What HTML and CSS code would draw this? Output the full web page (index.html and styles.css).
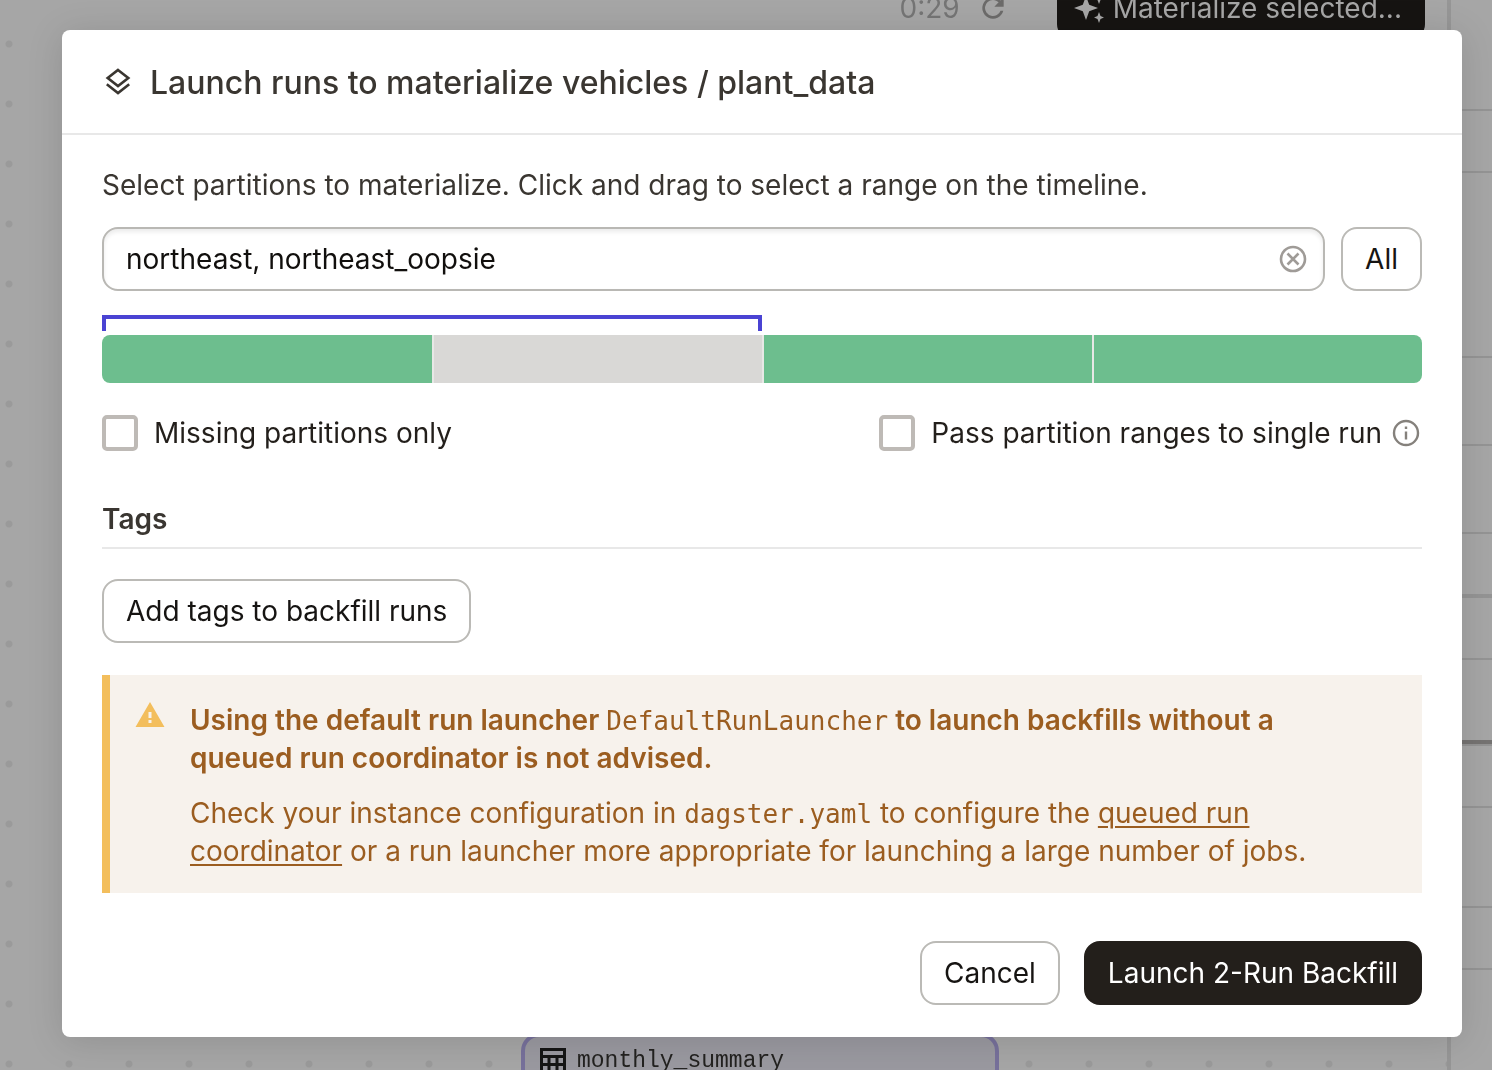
FILE: index.html
```html
<!DOCTYPE html>
<html lang="en">
<head>
<meta charset="utf-8">
<meta name="viewport" content="width=device-width, initial-scale=1">
<title>Launch runs to materialize</title>
<link rel="stylesheet" href="styles.css">
</head>
<body>
<div class="app" inert>
  <main class="graph">
    <div class="toolbar">
      <span class="timer">0:29</span>
      <svg class="refresh" viewBox="0 0 24 24" aria-hidden="true"><path d="M17.65 6.35A8 8 0 1 0 19.73 14h-2.08A6 6 0 1 1 12 6c1.66 0 3.14.69 4.22 1.78L13 11h7V4z"/></svg>
      <button class="materialize" type="button">
        <svg viewBox="0 0 32 32" aria-hidden="true"><path d="M13 4l3.200 8.800L25 16l-8.800 3.200L13 28l-3.200-8.800L1 16l8.800-3.200zM26 1l1.500 4L31 6.500 27.500 8 26 12l-1.500-4L21 6.500 24.500 5zM26 20l1.500 4 3.500 1.500-3.500 1.500L26 31l-1.500-4-3.500-1.500 3.500-1.500z"/></svg>
        <span>Materialize selected...</span>
      </button>
    </div>
    <div class="node">
      <svg viewBox="0 0 26 26" aria-hidden="true"><path d="M1.500 1.500h23v23h-23zM1.500 8.500h23M1.500 16.500h23M9 8.500v16M17 8.500v16"/></svg>
      <span>monthly_summary</span>
    </div>
  </main>
  <aside class="sidebar">
    <div class="row row-first"></div>
    <div class="row row-short"></div>
    <div class="row row-tall"></div>
    <div class="row row-mid"></div>
    <div class="row row-mid"></div>
    <div class="row row-short row-thick"></div>
    <div class="row row-short"></div>
    <div class="row row-mid row-tab"></div>
    <div class="row row-short"></div>
    <div class="row row-large"></div>
    <div class="row row-short"></div>
  </aside>
</div>

<div class="overlay">
  <div class="dialog" role="dialog" aria-modal="true" aria-labelledby="dialog-title">
    <header class="dialog-header">
      <svg viewBox="0 0 32 32" aria-hidden="true"><path d="M16 4L26.300 12 16 20 5.700 12zM4.800 18.300L16 27l11.200-8.700"/></svg>
      <h1 id="dialog-title">Launch runs to materialize vehicles / plant_data</h1>
    </header>

    <div class="dialog-body">
      <label class="intro" for="partitions">Select partitions to materialize. Click and drag to select a range on the timeline.</label>
      <div class="picker">
        <div class="field">
          <input id="partitions" type="text" value="northeast, northeast_oopsie">
          <button class="clear" type="button" aria-label="Clear">
            <svg viewBox="0 0 28 28" aria-hidden="true"><circle cx="14" cy="14" r="12"/><path d="M8.500 8.500l11 11M19.500 8.500l-11 11"/></svg>
          </button>
        </div>
        <button class="button" type="button">All</button>
      </div>

      <div class="timeline">
        <div class="range" style="width: 50%"></div>
        <div class="segments">
          <div class="segment"></div>
          <div class="segment missing"></div>
          <div class="segment"></div>
          <div class="segment"></div>
        </div>
      </div>

      <div class="options">
        <label class="option"><input type="checkbox">Missing partitions only</label>
        <div class="option-group">
          <label class="option"><input type="checkbox">Pass partition ranges to single run</label>
          <svg class="info" viewBox="0 0 28 28" aria-hidden="true"><circle cx="14" cy="14" r="12"/><path d="M14 7.500v2.500M14 12.500v8"/></svg>
        </div>
      </div>

      <h2 class="section-title">Tags</h2>
      <button class="button add-tags" type="button">Add tags to backfill runs</button>

      <div class="alert" role="alert">
        <svg viewBox="0 0 30 26" aria-hidden="true"><path fill-rule="evenodd" d="M15 0l14.500 25H.5zM13.500 10v6h3v-6zM13.500 18v3h3v-3z"/></svg>
        <div class="alert-text">
          <p class="alert-title">Using the default run launcher <code>DefaultRunLauncher</code> to launch backfills without a queued run coordinator is not advised.</p>
          <p>Check your instance configuration in <code>dagster.yaml</code> to configure the <a href="#coordinator">queued run coordinator</a> or a run launcher more appropriate for launching a large number of jobs.</p>
        </div>
      </div>

      <footer class="actions">
        <button class="button" type="button">Cancel</button>
        <button class="button primary" type="button">Launch 2-Run Backfill</button>
      </footer>
    </div>
  </div>
</div>
</body>
</html>
```
FILE: styles.css
```css
* {
  box-sizing: border-box;
}

body {
  margin: 0;
  font-family: Inter, "Liberation Sans", sans-serif;
  font-size: 28px;
  line-height: 38px;
  color: #231f1b;
  background: #a6a6a6;
}

h1,
h2,
p {
  margin: 0;
}

button,
input {
  font: inherit;
  color: inherit;
}

svg {
  flex: none;
}

/* Dimmed page behind the dialog */
.app {
  position: fixed;
  inset: 0;
  display: flex;
  overflow: hidden;
}

.graph {
  position: relative;
  flex: 1;
  background-image: radial-gradient(circle at 9px 44px, #9a9a9a 3px, transparent 4px);
  background-size: 60px 60px;
}

.toolbar {
  display: flex;
  justify-content: flex-end;
  align-items: center;
  margin-top: -24px;
  padding-right: 22px;
  color: #757575;
}

.refresh {
  width: 32px;
  height: 32px;
  margin: 0 48px 0 17px;
  fill: #6c6b6a;
}

.materialize {
  display: flex;
  align-items: center;
  gap: 8px;
  height: 64px;
  padding: 0 23px 0 16px;
  border: 0;
  border-radius: 16px;
  background: #161412;
  color: #a6a6a6;
}

.materialize svg {
  width: 32px;
  height: 32px;
  fill: #a6a6a6;
}

.node {
  position: absolute;
  top: 1033px;
  left: 521px;
  display: flex;
  gap: 11px;
  width: 478px;
  height: 120px;
  padding: 11px 15px;
  border: 4px solid #77719b;
  border-radius: 18px;
  background: #9a99a0;
  font-family: "Liberation Mono", monospace;
  font-size: 23px;
  line-height: 26px;
  color: #232220;
}

.node svg {
  width: 26px;
  height: 26px;
  fill: none;
  stroke: #151515;
  stroke-width: 3;
}

.sidebar {
  width: 45px;
  border-left: 4px solid #969696;
}

.row {
  border-bottom: 2px solid #949494;
}

.row-first { height: 111px; }
.row-short { height: 62px; }
.row-mid { height: 88px; }
.row-large { height: 100px; }
.row-tall { height: 185px; }

.row-thick {
  height: 64px;
  border-bottom-width: 4px;
}

.row-tab {
  height: 86px;
  box-shadow: inset 0 -4px #757372;
}

/* Dialog */
.overlay {
  position: relative;
  padding: 30px 30px 33px 62px;
}

.dialog {
  border-radius: 8px;
  background: #fff;
  box-shadow: 0 4px 36px rgba(0, 0, 0, 0.13);
}

.dialog-header {
  display: flex;
  align-items: center;
  gap: 16px;
  padding: 33px 40px 30px;
  border-bottom: 2px solid #e8e8e8;
  color: #3a3631;
}

.dialog-header svg {
  width: 32px;
  height: 32px;
  margin-bottom: 2px;
  fill: none;
  stroke: currentColor;
  stroke-width: 2.6;
}

.dialog-header h1 {
  font-size: 32px;
  line-height: 40px;
  font-weight: 500;
}

.dialog-body {
  padding: 31px 40px 32px;
}

.intro {
  display: block;
  color: #3a3631;
}

.picker {
  display: flex;
  gap: 16px;
  margin-top: 23px;
}

.field {
  flex: 1;
  display: flex;
  align-items: center;
  height: 64px;
  padding: 0 14px 0 22px;
  border: 2px solid #b9b8b4;
  border-radius: 16px;
  box-shadow: inset 0 3px 4px rgba(0, 0, 0, 0.08);
}

.field input {
  flex: 1;
  min-width: 0;
  padding: 0;
  border: 0;
  outline: 0;
  background: transparent;
  color: #110f0d;
}

.clear {
  display: flex;
  padding: 0 2px;
  border: 0;
  background: none;
}

.clear svg,
.info {
  width: 28px;
  height: 28px;
  fill: none;
  stroke: #9f9b97;
  stroke-width: 2.6;
}

.button {
  height: 64px;
  padding: 0 22px;
  border: 2px solid #bbbab6;
  border-radius: 16px;
  background: #fff;
  color: #161412;
}

.timeline {
  margin-top: 24px;
}

.range {
  height: 16px;
  border: 4px solid #4a43d3;
  border-bottom: 0;
}

.segments {
  display: grid;
  grid-template-columns: repeat(4, 1fr);
  height: 48px;
  margin-top: 4px;
  overflow: hidden;
  border-radius: 8px;
}

.segment {
  background: #6dbe8e;
}

.segment + .segment {
  border-left: 2px solid #e8e8e6;
}

.segment.missing {
  background: #d9d8d6;
}

.options {
  display: flex;
  justify-content: space-between;
  margin-top: 31px;
}

.option,
.option-group {
  display: flex;
  align-items: center;
}

.option {
  gap: 16px;
}

.option-group {
  gap: 10px;
  padding-right: 2px;
}

.option input {
  appearance: none;
  width: 36px;
  height: 36px;
  margin: 0;
  border: 4px solid #bebab6;
  border-radius: 5px;
  background: #fff;
}

.info {
  stroke: #85817c;
  stroke-width: 2.4;
}

.section-title {
  margin-top: 48px;
  padding-bottom: 9px;
  border-bottom: 2px solid #e8e8e8;
  font-size: 28px;
  font-weight: 600;
  color: #3a3631;
}

.add-tags {
  display: block;
  margin-top: 30px;
}

.alert {
  display: flex;
  gap: 25px;
  margin-top: 32px;
  padding: 26px 80px 23px 25px;
  border-left: 8px solid #f3be5c;
  background: #f7f2ec;
  color: #9b5d20;
}

.alert svg {
  width: 30px;
  height: 26px;
  margin-top: 1px;
  fill: #f3be5c;
}

.alert-text {
  flex: 1;
  display: grid;
  gap: 17px;
}

.alert-title {
  font-weight: 600;
}

.alert code {
  font-family: "DejaVu Sans Mono", monospace;
  font-size: 26px;
  font-weight: 400;
  line-height: 1;
}

.alert a {
  color: inherit;
  text-decoration-thickness: 2px;
  text-underline-offset: 3px;
}

.actions {
  display: flex;
  justify-content: flex-end;
  gap: 24px;
  margin-top: 48px;
}

.primary {
  border-color: #231f1b;
  background: #231f1b;
  color: #fff;
}
```
